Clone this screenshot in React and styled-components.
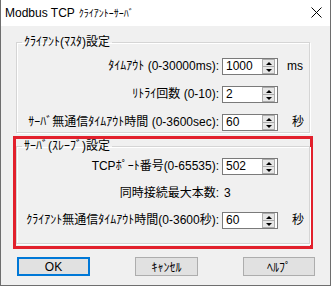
import styled, { createGlobalStyle } from 'styled-components'

const GlobalStyle = createGlobalStyle`
  html, body {
    margin: 0;
    padding: 0;
    background: #ffffff;
  }
  body {
    font-family: "Liberation Sans", "Noto Sans CJK JP", sans-serif;
    font-size: 12px;
    color: #000;
  }
`

const Window = styled.div`
  width: 331px;
  height: 286px;
  box-sizing: border-box;
  border: 1px solid #6e6e6e;
  border-top: none;
  background: #f0f0f0;
  display: flex;
  flex-direction: column;
`

const TitleBar = styled.div`
  height: 25px;
  background: #ffffff;
  display: flex;
  align-items: center;
  justify-content: space-between;
  padding: 0 8px 1px 4px;
  font-size: 12px;
`

const TitleText = styled.div`
  display: flex;
  align-items: baseline;
  gap: 4px;
`

const TitleKana = styled.span`
  font-family: "Noto Sans CJK JP", sans-serif;
  font-size: 10px;
`

const Body = styled.div`
  flex: 1;
  display: flex;
  flex-direction: column;
  padding: 9px 0 0 15px;
`

const Group = styled.fieldset`
  width: 294px;
  box-sizing: border-box;
  margin: 0;
  padding: ${p => p.$pad};
  border: 1px solid #d5d5d5;
  box-shadow: 1px 1px 0 #ffffff, inset 1px 1px 0 #ffffff;
  min-width: 0;
`

const Legend = styled.legend`
  margin-left: 5px;
  padding: 0 2px;
  height: 14px;
  line-height: 14px;
  font-size: 12px;
`

const Highlight = styled.div`
  width: 294px;
  margin: 3px 0 0 -3px;
  padding: 0 0 2px 0;
  border: 3px solid #e2202c;
`

const Rows = styled.div`
  display: grid;
  grid-template-columns: 203px 56px auto;
  grid-auto-rows: 17px;
  column-gap: 2px;
  row-gap: ${p => p.$gap}px;
  align-items: center;
`

const Label = styled.div`
  justify-self: end;
  white-space: nowrap;
  height: 17px;
  line-height: 17px;
  margin-right: 1px;
`

const Value = styled.div`
  padding-left: 2px;
  height: 17px;
  line-height: 17px;
`

const Unit = styled.div`
  margin-left: ${p => p.$indent}px;
  height: 17px;
  line-height: 17px;
`

const SpinBox = styled.div`
  width: 56px;
  height: 17px;
  box-sizing: border-box;
  background: #ffffff;
  border: 1px solid #7a7a7a;
  display: flex;
  align-items: stretch;
`

const SpinText = styled.div`
  flex: 1;
  padding-left: 3px;
  height: 15px;
  line-height: 15px;
`

const SpinButtons = styled.div`
  width: 13px;
  margin: 0 2px 0 0;
  display: flex;
  flex-direction: column;
`

const SpinButton = styled.div`
  flex: 1;
  background: #e6e6e6;
  border: 1px solid #acacac;
  display: flex;
  align-items: center;
  justify-content: center;
  & + & {
    border-top: none;
  }
`

const Arrow = styled.div`
  width: 0;
  height: 0;
  border-left: 3px solid transparent;
  border-right: 3px solid transparent;
  ${p => (p.$down ? 'border-top: 3px solid #000;' : 'border-bottom: 3px solid #000;')}
`

const ButtonRow = styled.div`
  width: 298px;
  margin: 8px 0 0 1px;
  display: flex;
  justify-content: space-between;
`

const Button = styled.div`
  width: ${p => p.$w}px;
  height: 19px;
  box-sizing: border-box;
  background: #e1e1e1;
  border: ${p => (p.$default ? '2px solid #0078d7' : '1px solid #adadad')};
  display: flex;
  align-items: center;
  justify-content: center;
  font-size: 12px;
`

function Spinner({ value }) {
  return (
    <SpinBox>
      <SpinText>{value}</SpinText>
      <SpinButtons>
        <SpinButton><Arrow /></SpinButton>
        <SpinButton><Arrow $down /></SpinButton>
      </SpinButtons>
    </SpinBox>
  )
}

function CloseIcon() {
  return (
    <svg width="11" height="11" viewBox="0 0 11 11">
      <path d="M0.5 0.5 L10.5 10.5 M10.5 0.5 L0.5 10.5" stroke="#000" strokeWidth="1" fill="none" />
    </svg>
  )
}

export default function App() {
  return (
    <>
      <GlobalStyle />
      <Window>
        <TitleBar>
          <TitleText>
            <span>Modbus TCP</span>
            <TitleKana>ｸﾗｲｱﾝﾄｰｻｰﾊﾞ</TitleKana>
          </TitleText>
          <CloseIcon />
        </TitleBar>
        <Body>
          <Group $pad="9px 0 1px 0">
            <Legend>ｸﾗｲｱﾝﾄ(ﾏｽﾀ)設定</Legend>
            <Rows $gap={11}>
              <Label>ﾀｲﾑｱｳﾄ (0-30000ms):</Label>
              <Spinner value="1000" />
              <Unit $indent={7}>ms</Unit>
              <Label>ﾘﾄﾗｲ回数 (0-10):</Label>
              <Spinner value="2" />
              <Unit />
              <Label>ｻｰﾊﾞ無通信ﾀｲﾑｱｳﾄ時間 (0-3600sec):</Label>
              <Spinner value="60" />
              <Unit $indent={12}>秒</Unit>
            </Rows>
          </Group>
          <Highlight>
            <Group $pad="5px 0 14px 0">
              <Legend>ｻｰﾊﾞ(ｽﾚｰﾌﾞ)設定</Legend>
              <Rows $gap={10}>
                <Label>TCPﾎﾟｰﾄ番号(0-65535):</Label>
                <Spinner value="502" />
                <Unit />
                <Label>同時接続最大本数:</Label>
                <Value>3</Value>
                <Unit />
                <Label>ｸﾗｲｱﾝﾄ無通信ﾀｲﾑｱｳﾄ時間(0-3600秒):</Label>
                <Spinner value="60" />
                <Unit $indent={12}>秒</Unit>
              </Rows>
            </Group>
          </Highlight>
          <ButtonRow>
            <Button $w={73} $default>OK</Button>
            <Button $w={63}>ｷｬﾝｾﾙ</Button>
            <Button $w={72}>ﾍﾙﾌﾟ</Button>
          </ButtonRow>
        </Body>
      </Window>
    </>
  )
}
